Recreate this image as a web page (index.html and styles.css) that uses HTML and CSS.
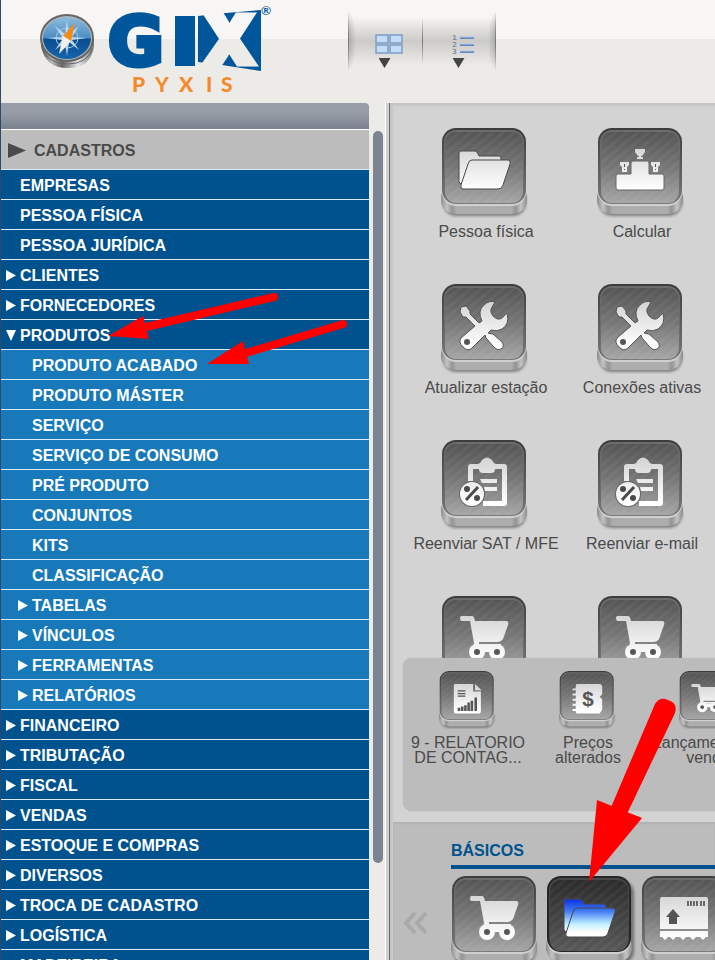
FILE: index.html
```html
<!DOCTYPE html>
<html lang="pt-BR">
<head>
    <meta charset="UTF-8">
    <meta name="viewport" content="width=device-width, initial-scale=1.0">
    <title>GIX Pyxis</title>
    <link rel="stylesheet" href="styles.css">
</head>
<body>
    <!-- Shared icon shapes -->
    <svg class="sprite" aria-hidden="true">
        <defs>
            <linearGradient id="face" x1="0" y1="0" x2="0" y2="1">
                <stop offset="0" stop-color="#555555"/>
                <stop offset="0.5" stop-color="#777777"/>
                <stop offset="1" stop-color="#a6a6a6"/>
            </linearGradient>
            <linearGradient id="face-dark" x1="0" y1="0" x2="0" y2="1">
                <stop offset="0" stop-color="#2c2c2c"/>
                <stop offset="1" stop-color="#585858"/>
            </linearGradient>
            <linearGradient id="rim" x1="0" y1="0" x2="0" y2="1">
                <stop offset="0" stop-color="#3c3c3c"/>
                <stop offset="1" stop-color="#7a7a7a"/>
            </linearGradient>
            <linearGradient id="base" x1="0" y1="0" x2="1" y2="0">
                <stop offset="0" stop-color="#8c8c8c"/>
                <stop offset="0.07" stop-color="#c4c4c4"/>
                <stop offset="0.13" stop-color="#949494"/>
                <stop offset="0.18" stop-color="#adadad"/>
                <stop offset="0.82" stop-color="#adadad"/>
                <stop offset="0.87" stop-color="#949494"/>
                <stop offset="0.93" stop-color="#c4c4c4"/>
                <stop offset="1" stop-color="#8c8c8c"/>
            </linearGradient>
            <linearGradient id="glyph" gradientUnits="userSpaceOnUse" x1="0" y1="18" x2="0" y2="62">
                <stop offset="0" stop-color="#d4d4d4"/>
                <stop offset="1" stop-color="#ffffff"/>
            </linearGradient>
            <linearGradient id="glyph-blue" gradientUnits="userSpaceOnUse" x1="0" y1="23" x2="0" y2="62">
                <stop offset="0" stop-color="#0a2fe0"/>
                <stop offset="0.3" stop-color="#3f78f2"/>
                <stop offset="0.65" stop-color="#c3f2ff"/>
                <stop offset="0.85" stop-color="#ffffff"/>
            </linearGradient>
            <pattern id="stripes" width="7" height="7" patternUnits="userSpaceOnUse" patternTransform="rotate(50)">
                <rect width="3" height="7" fill="#ffffff" opacity="0.04"/>
            </pattern>
            <filter id="soft" x="-20%" y="-20%" width="140%" height="140%">
                <feGaussianBlur stdDeviation="1.5"/>
            </filter>
        </defs>

        <symbol id="tile" viewBox="0 0 90 90">
            <rect x="2" y="60" width="83" height="28" rx="13" fill="#000" opacity="0.4" filter="url(#soft)"/>
            <path d="M0 68 L3 60 H83 L86 68 V74 Q83 86 70 86 H16 Q3 86 0 74 Z" fill="url(#base)"/>
            <rect x="1" y="0" width="84" height="78" rx="14" fill="#d0d0d0"/>
            <rect x="1" y="0" width="84" height="76" rx="14" fill="url(#rim)"/>
            <rect x="3" y="2" width="80" height="73" rx="12" fill="#6c6c6c"/>
            <rect x="4" y="4" width="78" height="71" rx="11" fill="url(#face)"/>
            <rect x="4" y="4" width="78" height="71" rx="11" fill="url(#stripes)"/>
        </symbol>
        <symbol id="tile-dark" viewBox="0 0 90 90">
            <rect x="4" y="4" width="84" height="84" rx="13" fill="#000" opacity="0.4" filter="url(#soft)"/>
            <path d="M0 68 L3 60 H83 L86 68 V74 Q83 86 70 86 H16 Q3 86 0 74 Z" fill="url(#base)"/>
            <rect x="1" y="0" width="84" height="78" rx="14" fill="#d0d0d0"/>
            <rect x="1" y="0" width="84" height="76" rx="14" fill="#262626"/>
            <rect x="3" y="2" width="80" height="73" rx="12" fill="#484848"/>
            <rect x="4" y="4" width="78" height="71" rx="11" fill="url(#face-dark)"/>
            <rect x="4" y="4" width="78" height="71" rx="11" fill="url(#stripes)"/>
        </symbol>

        <symbol id="folder" viewBox="0 0 90 90">
            <g stroke="#484848" stroke-width="1">
                <path d="M18 54 V25 Q18 23 20 23 H34 Q36 23 37 26 L38 28 H58 Q60 28 60 30 V40 L20 56 Z"/>
                <path d="M31 32 H66 Q70 32 69 36 L62 57 Q61 61 57 61 H22 Q19 61 20 57 L27 36 Q28 32 31 32 Z"/>
            </g>
        </symbol>
        <symbol id="podium" viewBox="0 0 90 90">
            <path d="M21 46 H34 V35 Q34 33 36 33 H50 Q52 33 52 35 V46 H65 Q67 46 67 48 V60 Q67 62 65 62 H21 Q19 62 19 60 V48 Q19 46 21 46 Z" stroke="#666"/>
            <path d="M38 21 H48 V24 L45 28 H44 V29 H46 V31 H40 V29 H42 V28 H41 L38 24 Z"/>
            <path d="M23 34 H32 V37 L30 39 V44 H25 V39 L23 37 Z M54 34 H63 V37 L61 39 V44 H56 V39 L54 37 Z"/>
            <path d="M27 36 H28 V39 H27 Z M58 36 H59 V39 H58 Z M27 41 H28 V42 H27 Z M58 41 H59 V42 H58 Z" fill="#555"/>
        </symbol>
        <symbol id="tools" viewBox="0 0 90 90">
            <path d="M20 23 L25 22 L29 27 V30 L38 39 L41 37 Q36 27 43 21 Q48 16 54 18 L50 25 Q49 28 52 32 Q57 37 61 34 L66 29 Q69 40 61 45 Q56 48 50 46 L47 49 L52 50 L61 58 Q64 62 60 65 Q56 67 52 62 L45 54 L44 51 L31 64 Q27 68 22 63 Q17 58 20 54 L34 42 L25 33 H22 L19 28 Z" stroke="#555" stroke-width="1"/>
            <circle cx="26" cy="58" r="3" fill="#555"/>
        </symbol>
        <symbol id="clipboard" viewBox="0 0 90 90">
            <path d="M30 24 H37 Q40 23 41 20 Q46 15 51 20 Q52 23 55 24 H63 Q66 24 66 27 V63 Q66 66 63 66 H42 V61 H61 V29 H54 Q54 33 50 33 H42 Q38 33 38 29 H32 V41 H27 V27 Q27 24 30 24 Z"/>
            <path d="M39 39 H56 V43 H41 Z M43 47 H56 V51 H44 Z"/>
            <circle cx="31" cy="54" r="13" fill="#666"/>
            <circle cx="31" cy="54" r="12"/>
            <path d="M25 60 L37 47" stroke="#4a4a4a" stroke-width="3"/>
            <circle cx="26" cy="49" r="3" fill="#4a4a4a"/>
            <circle cx="36" cy="58" r="3" fill="#4a4a4a"/>
        </symbol>
        <symbol id="cart" viewBox="0 0 90 90">
            <path d="M20 20 H31 Q33 20 34 25 H66 Q68 26 67 29 L62 43 Q60 46 56 46 H38 V48 H60 V51 H35 Q32 50 33 47 L29 25 H20 Q18 22 20 20 Z"/>
            <path d="M35 51 H56 V56 H35 Z"/>
            <circle cx="36" cy="56" r="8"/>
            <circle cx="56" cy="56" r="8"/>
            <circle cx="36" cy="56" r="3" fill="#555"/>
            <circle cx="56" cy="56" r="3" fill="#555"/>
        </symbol>
        <symbol id="report" viewBox="0 0 90 90">
            <path d="M25 20 H53 V32 H65 V63 Q65 66 62 66 H27 Q23 66 23 62 V22 Q23 20 25 20 Z"/>
            <path d="M56 20 L66 30 H56 Z"/>
            <path d="M29 31 H41 M29 35 H41 M29 39 H41" stroke="#555" stroke-width="2"/>
            <path d="M31 57 V62 M36 55 V62 M41 53 V62 M46 49 V62 M51 46 V62 M57 41 V62" stroke="#555" stroke-width="4"/>
        </symbol>
        <symbol id="pricebook" viewBox="0 0 90 90">
            <path d="M28 20 H64 L67 23 V36 L63 40 L67 44 V60 L63 66 H28 Q26 66 26 62 H21 V59 H26 V54 H21 V51 H26 V46 H21 V43 H26 V38 H21 V35 H26 V30 H21 V27 H26 V23 Q26 20 28 20 Z"/>
            <text x="45" y="54" text-anchor="middle" font-family="Liberation Sans" font-size="32" font-weight="bold" fill="#555">$</text>
        </symbol>
        <symbol id="box" viewBox="0 0 90 90">
            <path d="M21 21 H65 Q67 21 67 23 V53 H19 V23 Q19 21 21 21 Z"/>
            <path d="M19 55 H67 V61 H65 L62 64 L59 61 H55 L52 64 L49 61 H45 L42 64 L39 61 H35 L32 64 L29 61 H27 L24 64 L21 61 H19 Z"/>
            <path d="M32 33 L39 41 H36 V48 H28 V41 H25 Z" fill="#555"/>
            <path d="M47 25 V30 M50 25 V30 M53 25 V30 M56 25 V30 M60 25 V30 M63 25 V30" stroke="#666" stroke-width="2"/>
        </symbol>
    </svg>

    <header class="topbar">
        <svg class="logo" width="240" height="100" viewBox="0 0 240 100" role="img" aria-label="GIX Pyxis">
            <defs>
                <linearGradient id="metal" x1="0" y1="0" x2="1" y2="0">
                    <stop offset="0" stop-color="#555"/>
                    <stop offset="0.2" stop-color="#bbb"/>
                    <stop offset="0.4" stop-color="#666"/>
                    <stop offset="0.7" stop-color="#e8e8e8"/>
                    <stop offset="1" stop-color="#777"/>
                </linearGradient>
                <linearGradient id="dial" x1="0" y1="0" x2="0" y2="1">
                    <stop offset="0" stop-color="#8dbbdc"/>
                    <stop offset="0.5" stop-color="#4b8dc4"/>
                    <stop offset="0.52" stop-color="#0b4d90"/>
                    <stop offset="1" stop-color="#1565ab"/>
                </linearGradient>
                <linearGradient id="cut" gradientUnits="userSpaceOnUse" x1="0" y1="38" x2="0" y2="40">
                    <stop offset="0.5" stop-color="#f7f6f4"/>
                    <stop offset="0.5" stop-color="#ecebe7"/>
                </linearGradient>
            </defs>
            <!-- compass -->
            <path d="M1 38 V46 Q5 68 28 68 Q51 68 54 46 V38 Z" fill="url(#metal)"/>
            <path d="M2 48 Q8 64 28 64 Q47 64 53 48" fill="none" stroke="#666"/>
            <ellipse cx="27" cy="38" rx="27" ry="24" fill="#666"/>
            <ellipse cx="27" cy="38" rx="25" ry="22" fill="#b8b8b8"/>
            <ellipse cx="27" cy="38" rx="24" ry="21" fill="url(#dial)"/>
            <ellipse cx="27" cy="38" rx="11" ry="10" fill="none" stroke="#a5c8e2"/>
            <path d="M27 20 L29 34 L39 26 L32 37 L47 38 L32 40 L39 50 L29 42 L27 56 L25 42 L15 50 L22 40 L7 38 L22 37 L15 26 L25 34 Z" fill="#b9d8ee"/>
            <path d="M35 23 L31 41 L23 36 Z" fill="#f58a12"/>
            <path d="M23 36 L31 41 L19 54 Z" fill="#f4f0e8"/>
            <!-- wordmark -->
            <text x="68" y="65" font-family="DejaVu Sans, sans-serif" font-weight="bold" font-size="68" fill="#00569b" stroke="#00569b" stroke-width="5">G</text>
            <rect x="135" y="16" width="20" height="50" fill="#00569b"/>
            <path d="M158 16 L174 14 L221 10 V71 L182 65 L158 62 Z" fill="#00569b"/>
            <text x="163" y="64" font-family="Inter, Liberation Sans, sans-serif" font-weight="900" font-size="67" fill="url(#cut)" stroke="url(#cut)" stroke-width="5">X</text>
            <text x="226" y="15" text-anchor="middle" font-family="Liberation Sans" font-size="13" font-weight="bold" fill="#00569b">®</text>
            <text x="92 115 139 166 181" y="92" font-family="Lato, sans-serif" font-size="21" font-weight="900" fill="#f58a2b">PYXIS</text>
        </svg>

        <div class="view-switch">
            <button class="view-btn" type="button" aria-label="Ícones">
                <svg width="28" height="20" viewBox="0 0 28 20">
                    <g fill="#c3ddf8" stroke="#7d9cc6" stroke-width="1.500">
                        <rect x="1" y="1" width="12" height="8"/>
                        <rect x="15" y="1" width="12" height="8"/>
                        <rect x="1" y="11" width="12" height="8"/>
                        <rect x="15" y="11" width="12" height="8"/>
                    </g>
                </svg>
                <span class="caret"></span>
            </button>
            <button class="view-btn" type="button" aria-label="Lista">
                <svg width="22" height="20" viewBox="0 0 22 20" overflow="visible">
                    <g font-family="DejaVu Sans" font-size="7" font-weight="bold" fill="#8791a6">
                        <text x="0" y="6">1</text>
                        <text x="0" y="13">2</text>
                        <text x="0" y="20">3</text>
                    </g>
                    <path d="M8 4 H22 M8 11 H22 M8 18 H22" stroke="#6287bb" stroke-width="2"/>
                    <path d="M8 3 H22 M8 10 H22 M8 17 H22" stroke="#a9c6ea"/>
                </svg>
                <span class="caret"></span>
            </button>
        </div>
    </header>

    <div class="main">
        <nav class="sidebar">
            <div class="sidebar-head"></div>
            <a class="sidebar-title" href="#">CADASTROS</a>
            <ul class="menu">
                <li><a href="#">EMPRESAS</a></li>
                <li><a href="#">PESSOA FÍSICA</a></li>
                <li><a href="#">PESSOA JURÍDICA</a></li>
                <li><a class="parent" href="#">CLIENTES</a></li>
                <li><a class="parent" href="#">FORNECEDORES</a></li>
                <li>
                    <a class="parent open" href="#">PRODUTOS</a>
                    <ul class="submenu">
                        <li><a href="#">PRODUTO ACABADO</a></li>
                        <li><a href="#">PRODUTO MÁSTER</a></li>
                        <li><a href="#">SERVIÇO</a></li>
                        <li><a href="#">SERVIÇO DE CONSUMO</a></li>
                        <li><a href="#">PRÉ PRODUTO</a></li>
                        <li><a href="#">CONJUNTOS</a></li>
                        <li><a href="#">KITS</a></li>
                        <li><a href="#">CLASSIFICAÇÃO</a></li>
                        <li><a class="parent" href="#">TABELAS</a></li>
                        <li><a class="parent" href="#">VÍNCULOS</a></li>
                        <li><a class="parent" href="#">FERRAMENTAS</a></li>
                        <li><a class="parent" href="#">RELATÓRIOS</a></li>
                    </ul>
                </li>
                <li><a class="parent" href="#">FINANCEIRO</a></li>
                <li><a class="parent" href="#">TRIBUTAÇÃO</a></li>
                <li><a class="parent" href="#">FISCAL</a></li>
                <li><a class="parent" href="#">VENDAS</a></li>
                <li><a class="parent" href="#">ESTOQUE E COMPRAS</a></li>
                <li><a class="parent" href="#">DIVERSOS</a></li>
                <li><a class="parent" href="#">TROCA DE CADASTRO</a></li>
                <li><a class="parent" href="#">LOGÍSTICA</a></li>
                <li><a class="parent" href="#">MADEIREIRA</a></li>
            </ul>
        </nav>

        <div class="scrollbar"><div class="thumb"></div></div>

        <main class="workspace">
            <div class="desktop">
                <button class="app" type="button">
                    <svg class="icon"><use href="#tile"/><use href="#folder"/></svg>
                    <span>Pessoa física</span>
                </button>
                <button class="app" type="button">
                    <svg class="icon"><use href="#tile"/><use href="#podium"/></svg>
                    <span>Calcular</span>
                </button>
                <button class="app" type="button">
                    <svg class="icon"><use href="#tile"/><use href="#tools"/></svg>
                    <span>Atualizar estação</span>
                </button>
                <button class="app" type="button">
                    <svg class="icon"><use href="#tile"/><use href="#tools"/></svg>
                    <span>Conexões ativas</span>
                </button>
                <button class="app" type="button">
                    <svg class="icon"><use href="#tile"/><use href="#clipboard"/></svg>
                    <span>Reenviar SAT / MFE</span>
                </button>
                <button class="app" type="button">
                    <svg class="icon"><use href="#tile"/><use href="#clipboard"/></svg>
                    <span>Reenviar e-mail</span>
                </button>
                <button class="app" type="button" aria-label="Vendas">
                    <svg class="icon"><use href="#tile"/><use href="#cart"/></svg>
                </button>
                <button class="app" type="button" aria-label="Vendas">
                    <svg class="icon"><use href="#tile"/><use href="#cart"/></svg>
                </button>
            </div>

            <div class="shelf">
                <button class="app small" type="button">
                    <svg class="icon"><use href="#tile"/><use href="#report"/></svg>
                    <span>9 - RELATORIO<br>DE CONTAG...</span>
                </button>
                <button class="app small" type="button">
                    <svg class="icon"><use href="#tile"/><use href="#pricebook"/></svg>
                    <span>Preços<br>alterados</span>
                </button>
                <button class="app small" type="button">
                    <svg class="icon"><use href="#tile"/><use href="#cart"/></svg>
                    <span>Lançamento de<br>venda</span>
                </button>
            </div>

            <section class="dock">
                <button class="prev" type="button" aria-label="Anterior">
                    <svg width="26" height="24" viewBox="0 0 26 24">
                        <path d="M12 2 L3 12 L12 22 M23 2 L14 12 L23 22" fill="none" stroke="#a9a9a9" stroke-width="4"/>
                    </svg>
                </button>
                <div class="group">
                    <h2>BÁSICOS</h2>
                    <div class="group-items">
                        <button class="app" type="button" aria-label="Vendas">
                            <svg class="icon"><use href="#tile"/><use href="#cart"/></svg>
                        </button>
                        <button class="app active" type="button" aria-label="Cadastros">
                            <svg class="icon"><use href="#tile-dark"/><use href="#folder"/></svg>
                        </button>
                        <button class="app" type="button" aria-label="Estoque">
                            <svg class="icon"><use href="#tile"/><use href="#box"/></svg>
                        </button>
                    </div>
                </div>
            </section>
        </main>
    </div>

    <!-- Arrows showing the path to follow -->
    <svg class="hints" width="715" height="960" viewBox="0 0 715 960" aria-hidden="true">
        <g fill="#ff0000" stroke="#ff0000" stroke-linecap="round">
            <path d="M274 297 L146 327" stroke-width="8"/>
            <path d="M108 336 L143 316 L149 339 Z" stroke="none"/>
            <path d="M343 324 L246 353" stroke-width="8"/>
            <path d="M207 364 L243 341 L249 364 Z" stroke="none"/>
            <path d="M655 704 Q660 696 668 700 Q678 703 675 713 L626 816 L609 812 Z" stroke="none"/>
            <path d="M589 882 L597 800 L642 818 Z" stroke="none"/>
        </g>
    </svg>
</body>
</html>
```
FILE: styles.css
```css
* {
    box-sizing: border-box;
}

body {
    margin: 0;
    height: 100vh;
    display: flex;
    flex-direction: column;
    border-left: 1px solid #2f4866;
    background-color: #ecebe7;
    font-family: "Liberation Sans", Arial, sans-serif;
    font-size: 16px;
    overflow: hidden;
}

button {
    padding: 0;
    border: 0;
    background: none;
    font: inherit;
    color: inherit;
    cursor: pointer;
}

ul {
    margin: 0;
    padding: 0;
    list-style: none;
}

.sprite {
    position: absolute;
    width: 0;
    height: 0;
}

/* Top bar */
.topbar {
    flex: none;
    display: flex;
    align-items: flex-start;
    gap: 68px;
    height: 103px;
    padding-left: 39px;
    background: linear-gradient(#f7f6f4 39px, #ecebe7 39px);
}

.logo {
    flex: none;
    overflow: visible;
}

.view-switch {
    display: flex;
    width: 148px;
    height: 60px;
    margin-top: 11px;
    background:
        linear-gradient(transparent, #777, transparent) left / 1px 100% no-repeat,
        linear-gradient(transparent, #777, transparent) right / 1px 100% no-repeat,
        linear-gradient(transparent, #777, transparent) center / 1px 80% no-repeat,
        radial-gradient(closest-side, #aaa, transparent) -8px 0 / 16px 100% no-repeat,
        radial-gradient(closest-side, #aaa, transparent) 140px 0 / 16px 100% no-repeat,
        linear-gradient(transparent 10%, #cccbc8 50%, transparent 90%);
}

.view-btn {
    flex: 1;
    display: flex;
    flex-direction: column;
    align-items: center;
    gap: 4px;
    padding: 23px 0 0 7px;
}

.caret {
    width: 12px;
    height: 10px;
    margin-right: 8px;
    background-color: #444;
    clip-path: polygon(0 0, 100% 0, 50% 100%);
}

.main {
    flex: 1;
    display: flex;
    min-height: 0;
}

/* Side menu */
.sidebar {
    flex: none;
    width: 368px;
    overflow: hidden;
}

.sidebar-head {
    height: 27px;
    border-bottom: 1px solid #fff;
    border-top-right-radius: 4px;
    background: linear-gradient(#979da7 40%, #78818d);
}

.sidebar a {
    display: flex;
    align-items: center;
    gap: 4px;
    height: 30px;
    border-bottom: 1px solid #d9ecf8;
    padding-top: 2px;
    padding-left: 19px;
    background-color: #00528e;
    color: #fff;
    font-weight: bold;
    text-decoration: none;
}

.sidebar .sidebar-title {
    gap: 8px;
    height: 40px;
    padding-left: 7px;
    background-color: #bcbcbc;
    color: #4a4a4a;
}

.sidebar-title::before {
    content: "";
    width: 18px;
    height: 15px;
    background-color: #4a4a4a;
    clip-path: polygon(0 0, 100% 50%, 0 100%);
}

.parent::before {
    content: "";
    width: 10px;
    height: 11px;
    background-color: #fff;
    clip-path: polygon(0 0, 100% 50%, 0 100%);
}

.parent.open::before {
    clip-path: polygon(0 0, 100% 0, 50% 100%);
}

.sidebar .parent {
    padding-left: 5px;
}

.sidebar .submenu a {
    padding-left: 31px;
    background-color: #1779b9;
}

.sidebar .submenu .parent {
    padding-left: 17px;
}

.scrollbar {
    flex: none;
    width: 17px;
    padding: 28px 2px 0 4px;
    border-right: 1px solid #fff;
}

.thumb {
    height: 732px;
    border-radius: 5px;
    background-color: #7c8491;
}

/* Work area */
.workspace {
    flex: 1;
    display: flex;
    flex-direction: column;
    min-width: 0;
    margin-left: 3px;
    border-left: 1px solid #6b6b6b;
    background-color: #d3d3d3;
    box-shadow: -3px 0 #d0d0d0, inset 3px 3px 2px #c6c6c6;
    overflow: hidden;
}

.desktop {
    flex: 1;
    display: grid;
    grid-template-columns: repeat(auto-fill, 156px);
    grid-auto-rows: 156px;
    min-height: 0;
    padding: 25px 0 0 18px;
    margin-right: -16px;
    overflow: hidden;
}

.app {
    display: flex;
    flex-direction: column;
    align-items: center;
    gap: 5px;
    color: #4a4a4a;
    line-height: 18px;
    white-space: nowrap;
}

.icon {
    flex: none;
    width: 90px;
    height: 90px;
    fill: url(#glyph);
}

.active .icon {
    fill: url(#glyph-blue);
}

.shelf {
    flex: none;
    display: flex;
    height: 153px;
    margin: 0 -80px 11px 13px;
    padding: 13px 0 0 5px;
    border-radius: 9px;
    background-color: #bcbcbc;
    box-shadow: 0 0 1px #999;
}

.small {
    flex: none;
    align-self: flex-start;
    gap: 6px;
    width: 120px;
    line-height: 15px;
}

.small .icon {
    width: 58px;
    height: 58px;
}

.dock {
    flex: none;
    display: flex;
    gap: 22px;
    height: 138px;
    margin-left: 3px;
    padding-left: 10px;
    background-color: #bcbcbc;
    box-shadow: inset 0 2px 2px #b2b2b2;
    overflow: hidden;
}

.prev {
    padding-top: 68px;
}

.group {
    flex: 1;
    min-width: 0;
    padding-top: 20px;
}

.group h2 {
    margin: 0;
    padding-bottom: 5px;
    border-bottom: 4px solid #00528e;
    color: #00528e;
    font-size: 16px;
    line-height: 18px;
}

.group-items {
    display: flex;
    gap: 5px;
    padding-top: 7px;
}

/* Arrows over the page */
.hints {
    position: absolute;
    top: 0;
    left: 0;
    pointer-events: none;
}
```
